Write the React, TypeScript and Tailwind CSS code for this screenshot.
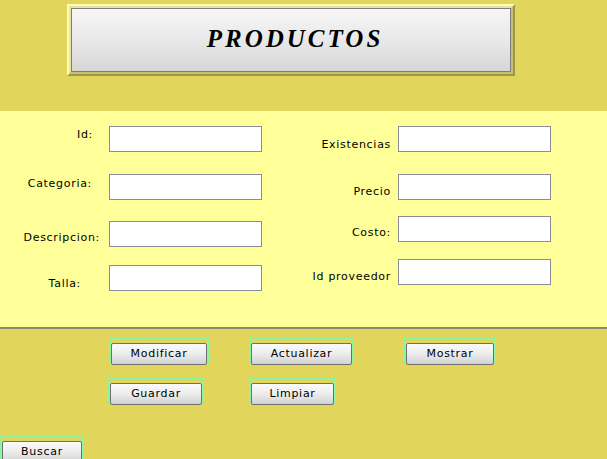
import React from "react";

const leftFields = [
  { label: "Id:", pr: "pr-[16px]", mt: "mt-[2px]", h: "h-[48px]" },
  { label: "Categoria:", pr: "pr-[17px]", mt: "mt-[3px]", h: "h-[47px]" },
  { label: "Descripcion:", pr: "pr-[9px]", mt: "mt-[10px]", h: "h-[44px]" },
  { label: "Talla:", pr: "pr-[28px]", mt: "mt-[12px]", h: "h-[26px]" },
];

const rightFields = [
  { label: "Existencias", mt: "mt-[12px]", h: "h-[48px]" },
  { label: "Precio", mt: "mt-[11px]", h: "h-[42px]" },
  { label: "Costo:", mt: "mt-[10px]", h: "h-[43px]" },
  { label: "Id proveedor", mt: "mt-[11px]", h: "h-[26px]" },
];

const Field: React.FC = () => (
  <input
    type="text"
    className="w-[153px] h-[26px] bg-white border border-[#8a8d96] outline-none"
  />
);

const Btn: React.FC<{ label: string; w: string; cls?: string }> = ({
  label,
  w,
  cls = "",
}) => (
  <div className={`${w} h-[26px] shrink-0 border-2 border-[#8cf5a2] ${cls}`}>
    <button className="w-full h-full rounded-[2px] border border-[#6f6f6f] bg-gradient-to-b from-[#fbfbfb] via-[#ececec] to-[#d2d2d2] text-[11px] tracking-[0.7px] text-black leading-none">
      {label}
    </button>
  </div>
);

const App: React.FC = () => {
  return (
    <div
      className="w-[607px] h-[459px] overflow-hidden bg-[#e2d55b] flex flex-col text-black"
      style={{ fontFamily: '"DejaVu Sans", Tahoma, sans-serif' }}
    >
      <header className="h-[111px] shrink-0 pt-[4px] pl-[67px]">
        <div className="w-[448px] h-[72px] border-2 border-t-[#ffffb0] border-l-[#ffffb0] border-b-[#9b9650] border-r-[#9b9650]">
          <div className="w-full h-full border-2 border-t-[#e9e3a0] border-l-[#e9e3a0] border-b-[#c9bf64] border-r-[#c9bf64]">
            <div className="w-full h-full border border-[#7d7d7d] bg-gradient-to-b from-[#f6f6f6] via-[#e9e9e9] to-[#d6d6d6] flex items-center justify-center">
              <h1
                className="text-[25px] font-bold italic tracking-[3px] pl-[8px] mt-[-2px]"
                style={{ fontFamily: '"Liberation Serif", serif' }}
              >
                PRODUCTOS
              </h1>
            </div>
          </div>
        </div>
      </header>

      <section className="h-[218px] shrink-0 bg-[#ffff99] border-t border-t-[#ffffc4] border-b-2 border-b-[#8c8a6c] pt-[14px] flex text-[11px] tracking-[0.7px] leading-[13px]">
        <div className="flex flex-col">
          {leftFields.map((f) => (
            <div key={f.label} className={`flex items-start shrink-0 ${f.h}`}>
              <span className={`w-[109px] text-right ${f.pr} ${f.mt}`}>
                {f.label}
              </span>
              <Field />
            </div>
          ))}
        </div>
        <div className="flex flex-col">
          {rightFields.map((f) => (
            <div key={f.label} className={`flex items-start shrink-0 ${f.h}`}>
              <span className={`w-[136px] text-right pr-[7px] ${f.mt}`}>
                {f.label}
              </span>
              <Field />
            </div>
          ))}
        </div>
      </section>

      <section className="flex flex-col shrink-0 pt-[9px]">
        <div className="flex pl-[109px]">
          <Btn label="Modificar" w="w-[100px]" />
          <Btn label="Actualizar" w="w-[105px]" cls="ml-[40px]" />
          <Btn label="Mostrar" w="w-[92px]" cls="ml-[50px]" />
        </div>
        <div className="flex pl-[108px] mt-[14px]">
          <Btn label="Guardar" w="w-[96px]" />
          <Btn label="Limpiar" w="w-[87px]" cls="ml-[45px]" />
        </div>
        <div className="flex mt-[32px]">
          <Btn label="Buscar" w="w-[84px]" />
        </div>
      </section>
    </div>
  );
};

export default App;
